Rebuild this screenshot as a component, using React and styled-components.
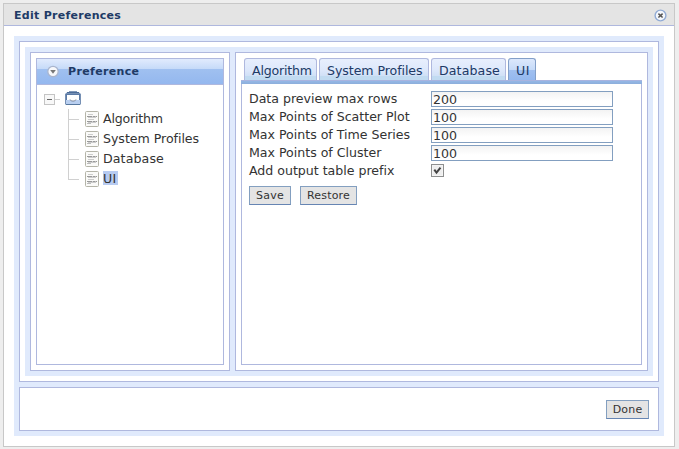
import React from 'react';
import styled, { createGlobalStyle } from 'styled-components';

const Global = createGlobalStyle`
  * { box-sizing: border-box; }
  body { margin: 0; background: #eeeeee; font-family: "DejaVu Sans", Verdana, sans-serif; font-size: 12.6px; color: #333333; }
`;
const Page = styled.div`height: 449px; overflow: hidden; padding: 3px;`;
const Dialog = styled.main`
  width: 672px; height: 444px; border: 1px solid #c8c8c8; background: #fff;
`;
const TitleBar = styled.header`
  height: 22px; display: flex; align-items: center; justify-content: space-between;
  padding: 2px 7px 0 10px; background: #e4e4e4; border-bottom: 1px solid #afb8de;
`;
const Title = styled.h1`
  margin: 0; font-size: 11px; line-height: 16px; font-weight: bold; color: #203a66; letter-spacing: ${p => p.$spacing}px;
`;
const Frame = styled.div`
  width: 650px; height: 400px; margin: 10px 0 0 10px; padding: 5px; background: #e0eafc;
  display: flex; flex-direction: column; gap: 5px;
`;
const Box = styled.section`
  border: 1px solid #afb8de; background: #fff; padding: 5px;
`;
const MainBox = styled(Box)`height: 341px;`;
const FooterBox = styled(Box)`
  height: 44px; display: flex; justify-content: flex-end; align-items: flex-start; padding: 12px 9px;
`;
const Split = styled.div`
  height: 329px; padding: 5px; background: #e0eafc; display: flex; gap: 5px;
`;
const SideBox = styled(Box)`width: 200px;`;
const ContentBox = styled(Box)`width: 413px;`;
const Panel = styled.div`height: 307px; border: 1px solid #afb8de;`;
const PanelHead = styled.header`
  height: 26px; display: flex; align-items: center; gap: 9px; padding-left: 10px;
  border-bottom: 1px solid #afb8de;
  background: linear-gradient(#e1ebfd 0, #c5daf8 10px, #a0c0f0 10px, #94b8ef 25px);
`;
const Root = styled.div`
  height: 24px; display: flex; align-items: center; gap: 4px; padding: 4px 0 0 7px;
`;
const Tray = styled.span`display: flex; margin-bottom: 3px;`;
const Branch = styled.ul`list-style: none; margin: 0; padding: 0 0 0 31px;`;
const Item = styled.li`
  height: 20px; display: flex; align-items: center;
`;
const Label = styled.span`
  height: 14px; margin: 0 0 2px 4px; padding: 1px 1px 0 0; line-height: 14px; white-space: nowrap;
  letter-spacing: ${p => p.$spacing}px; background: ${p => (p.$on ? '#b7cbf1' : 'transparent')};
`;
const Tabs = styled.nav`
  height: 22px; display: flex; gap: 2px; padding-left: 3px;
`;
const TAB_ON = 'linear-gradient(#dce8fc 0, #c5daf8 11px, #a0c0f0 11px, #94b8ef 21px)';
const TAB_OFF = 'linear-gradient(#e8effd 0, #dde8fb 11px, #d0e0f6 17px, #c1dbf1 17px, #c1dbf1 21px)';
const Tab = styled.button`
  width: ${p => p.$w}px; height: 22px; padding: 2px 0 0 7px; margin: 0; text-align: left;
  border: 1px solid ${p => (p.$on ? '#839fc8' : '#afb8de')}; border-bottom: 0; border-radius: 3px 3px 0 0;
  font: inherit; line-height: 18px; color: #203a66; white-space: nowrap; letter-spacing: ${p => p.$spacing}px;
  background: ${p => (p.$on ? TAB_ON : TAB_OFF)};
`;
const TabLine = styled.div`height: 4px; background: linear-gradient(#a9b4df 1px, #94b8e6 1px, #8daedb 4px);`;
const TabBody = styled.div`
  height: 281px; border: 1px solid #afb8de; border-top: 0; padding: 7px 0 0 7px;
`;
const Field = styled.label`
  height: 18px; display: flex; align-items: flex-start;
`;
const FieldName = styled.span`
  width: 182px; line-height: 16px; white-space: nowrap; letter-spacing: -0.02px;
`;
const Input = styled.input`
  width: 182px; height: 16px; margin: 0; padding: 1px 1px 0 1px; border: 1px solid #839fc0; border-radius: 0;
  background: linear-gradient(#f3f3f3, #fff 9px); font: inherit; line-height: 14px; color: #333;
  outline: 0;
`;
const Check = styled.input`
  appearance: none; width: 13px; height: 13px; margin: 1px 0 0; border: 1px solid #8e8f8f;
  box-shadow: inset 0 0 0 1px #f4f4f4; background: #eee;
`;
const CheckWrap = styled.span`
  display: grid;
  > * { grid-area: 1 / 1; }
  svg { margin-top: 1px; pointer-events: none; }
`;
const Actions = styled.div`display: flex; gap: 9px; margin-top: 5px;`;
const Button = styled.button`
  width: ${p => p.$w}px; height: 19px; padding: 0; border: 1px solid #839fc0; border-bottom-color: #6685b3; border-radius: 0;
  background: #e4e4e4; color: #333; font-family: inherit; font-size: 11px; line-height: 16px; letter-spacing: 0.2px;
`;

const CloseIcon = () => (
  <svg width="13" height="13" viewBox="0 0 13 13">
    <circle cx="6.5" cy="6.5" r="5.4" fill="#f4f7fc" stroke="#91abd5" strokeWidth="1.4" />
    <path d="M4.4 4.6l4.2 3.9M8.6 4.6L4.4 8.5" stroke="#555" strokeWidth="1.5" />
  </svg>
);
const CollapseIcon = () => (
  <svg width="12" height="13" viewBox="0 0 12 13">
    <circle cx="6" cy="6.5" r="5.2" fill="#f7f8fb" stroke="#a9b5ce" strokeWidth="1.3" />
    <path d="M3.2 5h5.6L6 8.8z" fill="#777" />
  </svg>
);
const ExpanderIcon = () => (
  <svg width="17" height="11" viewBox="0 0 17 11">
    <rect x=".5" y=".5" width="10" height="10" fill="#f8f8f8" stroke="#c4c4c4" />
    <path d="M3 5.5h5" stroke="#666" />
    <path d="M11 5.5h5" stroke="#d0d0d0" />
  </svg>
);
const TrayIcon = () => (
  <svg width="16" height="14" viewBox="0 0 16 14">
    <path d="M0 3L2.500 1h11L16 3v10.500H0z" fill="#7690b4" />
    <path d="M4 .5h8" stroke="#8299b9" />
    <path d="M2 1.500h12" stroke="#4c6c98" />
    <path d="M1 3h14v6H1z" fill="#5c7ba6" />
    <path d="M2 4h12v5H2z" fill="#fff" />
    <path d="M1 9h4c.6 1.800 5.400 1.800 6 0h4v4H1z" fill="#b9cff0" />
    <path d="M5 8.500c.6 2 5.400 2 6 0" fill="#fff" stroke="#8a94a6" />
    <path d="M1 13.500h14" stroke="#57789f" />
  </svg>
);
const LinkIcon = ({ last }) => (
  <svg width="13" height="20" viewBox="0 0 13 20">
    <path d={last ? 'M.5 0v10.5' : 'M.5 0v20'} stroke="#d0d0d0" />
    <path d="M0 10.5h11" stroke="#d0d0d0" />
  </svg>
);
const DocIcon = () => (
  <svg width="18" height="16" viewBox="0 0 18 16">
    <rect x="4.5" y=".5" width="13" height="15" rx="1" fill="#fafaf8" stroke="#b4b4a8" />
    <path d="M7 3.5h5M7 6.5h8M7 8.5h6M7 11.5h8" stroke="#ccc" />
    <path d="M6 5.5h10M6 10.5h10" stroke="#999" strokeDasharray="5 .6 3 .4" />
    <path d="M6 12.5h4" stroke="#bbb" />
  </svg>
);
const Tick = () => (
  <svg width="13" height="13" viewBox="0 0 13 13">
    <path d="M3.3 5.7l2.2 3L9.5 3.6" fill="none" stroke="#444" strokeWidth="2" />
  </svg>
);

const TREE = [['Algorithm', -0.2], ['System Profiles', -0.04], ['Database', 0.1], ['UI', 0.3]];
const TABS = [['Algorithm', 73, -0.2], ['System Profiles', 110, -0.08], ['Database', 75, 0.1], ['UI', 28, 0.6]];
const FIELDS = [
  ['Data preview max rows', '200'],
  ['Max Points of Scatter Plot', '100'],
  ['Max Points of Time Series', '100'],
  ['Max Points of Cluster', '100'],
];

export default function App() {
  return (
    <Page>
      <Global />
      <Dialog>
        <TitleBar><Title $spacing={0.28}>Edit Preferences</Title><CloseIcon /></TitleBar>
        <Frame>
          <MainBox>
            <Split>
              <SideBox>
                <Panel>
                  <PanelHead><CollapseIcon /><Title as="h2" $spacing={0.35}>Preference</Title></PanelHead>
                  <Root><ExpanderIcon /><Tray><TrayIcon /></Tray></Root>
                  <Branch>
                    {TREE.map(([name, s]) => (
                      <Item key={name}>
                        <LinkIcon last={name === 'UI'} /><DocIcon />
                        <Label $on={name === 'UI'} $spacing={s}>{name}</Label>
                      </Item>
                    ))}
                  </Branch>
                </Panel>
              </SideBox>
              <ContentBox>
                <Tabs>
                  {TABS.map(([name, w, s]) => <Tab key={name} $w={w} $spacing={s} $on={name === 'UI'}>{name}</Tab>)}
                </Tabs>
                <TabLine />
                <TabBody>
                  {FIELDS.map(([name, value]) => (
                    <Field key={name}><FieldName>{name}</FieldName><Input defaultValue={value} /></Field>
                  ))}
                  <Field>
                    <FieldName>Add output table prefix</FieldName>
                    <CheckWrap><Check type="checkbox" defaultChecked /><Tick /></CheckWrap>
                  </Field>
                  <Actions><Button $w={42}>Save</Button><Button $w={57}>Restore</Button></Actions>
                </TabBody>
              </ContentBox>
            </Split>
          </MainBox>
          <FooterBox><Button $w={43}>Done</Button></FooterBox>
        </Frame>
      </Dialog>
    </Page>
  );
}
